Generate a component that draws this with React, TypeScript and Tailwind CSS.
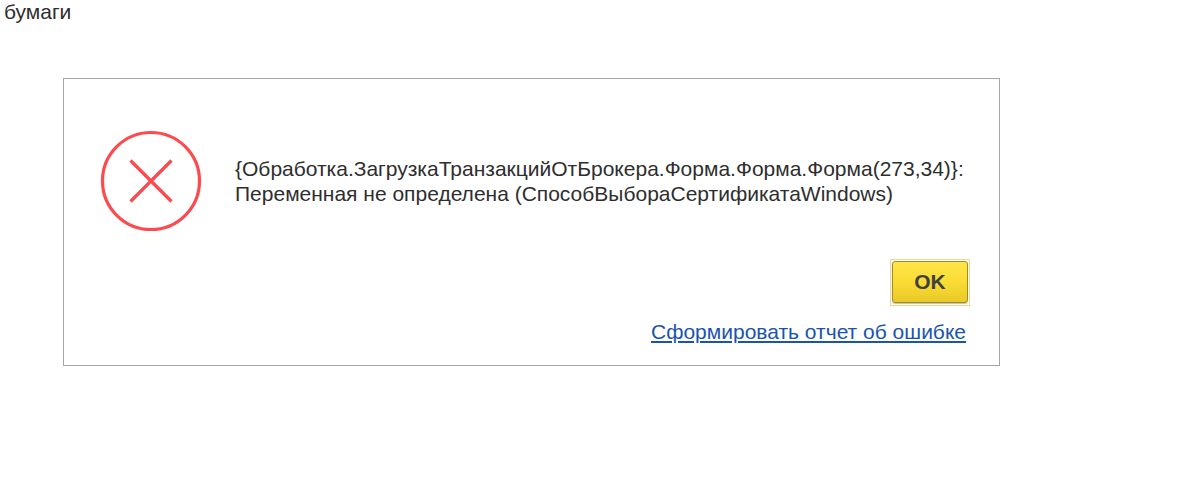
export default function App() {
  return (
    <div className="min-h-screen bg-white font-['Liberation_Sans',Arial,sans-serif] text-[#2e2e2e]">
      <p className="px-1 text-[21px] leading-6">бумаги</p>
      <main className="pl-[63px] pr-[200px] pt-[54px]">
        <section role="alertdialog" aria-labelledby="message" className="flex flex-col border border-[#a6a6a6] pb-[19px] pl-9 pr-[29px] pt-[51px]">
          <div className="flex items-center gap-[33px]">
            <svg viewBox="0 0 102 102" className="size-[102px] shrink-0" fill="none" stroke="#fc4a4e" strokeWidth="3.2" aria-hidden="true">
              <circle cx="51" cy="51" r="48.5" />
              <path d="M30.5 30.5 71.5 71.5M71.5 30.5 30.5 71.5" />
            </svg>
            <p id="message" className="text-[21px] leading-[25px]">
              {"{Обработка.ЗагрузкаТранзакцийОтБрокера.Форма.Форма.Форма(273,34)}:"}
              <br />
              Переменная не определена (СпособВыбораСертификатаWindows)
            </p>
          </div>
          <div className="mt-[27px] self-end border border-[#f0d890] px-px pb-[2px] pt-px">
            <button type="button" className="block h-[42px] w-[76px] rounded-[3px] border border-[#a08c1e] bg-linear-to-b from-[#ffe54a] via-[#fadc34] to-[#e8c928] text-[21px] font-bold text-[#404040] shadow-[0_1px_1px_#00000040]">OK</button>
          </div>
          <a href="#report" className="mr-1 mt-3 self-end text-[21px] leading-7 text-[#1a54ae] underline">Сформировать отчет об ошибке</a>
        </section>
      </main>
    </div>
  );
}
